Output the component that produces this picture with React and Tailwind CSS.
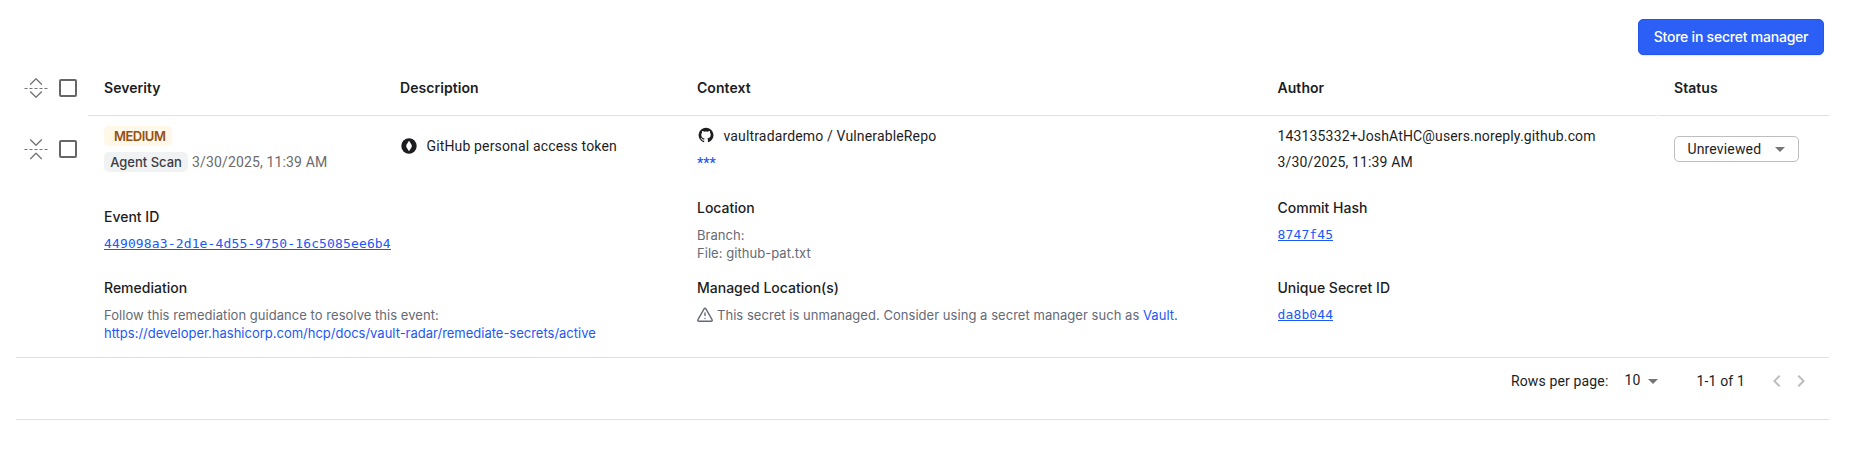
const body = "font-[Roboto,sans-serif] text-sm leading-5 tracking-[0.15px]";
const heading = "font-[Inter,sans-serif] text-sm leading-5 font-medium";
const small = "font-[Inter,sans-serif] text-[13px] leading-[18px] text-[#656a76] tracking-[0.04px]";
const link = "text-[#1c58f5]";
const columns = "grid grid-cols-[72px_296px_297px_580.5px_396.5px_171px]";

function RowsIcon({ collapse }) {
  return (
    <svg className="size-6 shrink-0" viewBox="0 0 24 24" fill="none" stroke="#737373" strokeWidth="1.25" strokeLinecap="round" strokeLinejoin="round">
      <path d="M.5 12.5h23" strokeDasharray="3 2" strokeLinecap="butt" strokeWidth="1" />
      {collapse ? (
        <path d="M6.5 2.8L12 8.3l5.5-5.5M6.5 21.7L12 16.2l5.5 5.5" />
      ) : (
        <path d="M6.5 8.3L12 2.8l5.5 5.5M6.5 15.8l5.5 5.5 5.5-5.5" />
      )}
    </svg>
  );
}

function Controls({ collapse }) {
  return (
    <div className="flex items-center gap-[11px] pl-2">
      <RowsIcon collapse={collapse} />
      <span className="size-[18px] rounded-[2px] border-2 border-[#666]" />
    </div>
  );
}

function Caret() {
  return (
    <svg className="size-6 shrink-0" viewBox="0 0 24 24" fill="#757575">
      <path d="M7 10l5 5 5-5z" />
    </svg>
  );
}

function Header({ children, className = "" }) {
  return (
    <div className={`flex items-center border-b border-[#e0e0e0] pt-px pl-4 font-[Inter,sans-serif] text-sm font-semibold tracking-[0.05px] ${className}`}>
      <span className="leading-5">{children}</span>
    </div>
  );
}

function Hash({ children }) {
  return (
    <a className={`${link} mt-[3px] block w-fit border-b border-[#1c58f5] font-['DejaVu_Sans_Mono',monospace] text-[13px] leading-[11px] tracking-[0.14px]`}>
      {children}
    </a>
  );
}

function Detail({ title, children, className = "" }) {
  return (
    <div className={`h-16 pl-4 ${className}`}>
      <div className={heading}>{title}</div>
      <div className={`pt-2 ${small}`}>{children}</div>
    </div>
  );
}

export default function App() {
  return (
    <div className="h-[449px] w-[1864px] overflow-hidden bg-white pr-[35px] pl-4 text-[#1d1d1f]">
      <div className="flex h-[60px] justify-end pt-[19px] pr-[5px]">
        <button className="h-9 w-[186px] rounded-[5px] border border-[#2457e6] bg-[#2b5ff6] font-[Inter,sans-serif] text-sm font-medium tracking-[-0.22px] text-white shadow-[0_1px_1px_rgba(101,106,118,0.15)]">
          Store in secret manager
        </button>
      </div>

      <div className={`${columns} h-14`}>
        <Controls />
        <Header>Severity</Header>
        <Header>Description</Header>
        <Header>Context</Header>
        <Header className="mr-px">Author</Header>
        <Header>Status</Header>
      </div>

      <div className={`${columns} h-[66px]`}>
        <Controls collapse />
        <div className="pt-[10px] pl-4">
          <div className="flex h-5 w-[68px] items-center rounded-[5px] bg-[#fff7e8] pl-[10px] font-[Inter,sans-serif] text-[13px] leading-5 font-semibold tracking-[-0.5px] text-[#96500f]">
            <span className="-mt-px">MEDIUM</span>
          </div>
          <div className="mt-[6px] flex h-5 items-center gap-[4px]">
            <span className="h-5 w-[84px] rounded-[5px] bg-[#f1f2f3] text-center font-[Inter,sans-serif] text-[13px] leading-[21px] font-medium text-[#3b3d45]">Agent Scan</span>
            <span className={`${body} text-[#6b6b6b]`}>3/30/2025, 11:39 AM</span>
          </div>
        </div>
        <div className="flex h-[60px] items-center gap-[9.5px] pl-[17px]">
          <svg className="-mt-px size-4" viewBox="0 0 16 16">
            <circle cx="8" cy="8" r="7.7" fill="#1d1d1f" />
            <path d="M8 2.8L10.7 7v2L8 13.2 5.3 9V7z" fill="#fff" />
          </svg>
          <span className={body}>GitHub personal access token</span>
        </div>
        <div className="pt-[10px] pl-4">
          <div className="flex h-5 items-center gap-[9.5px]">
            <svg className="-mt-[3px] ml-px size-4" viewBox="0 0 24 24" fill="#1d1d1f">
              <path d="M12 1.27a11 11 0 00-3.48 21.46c.55.09.73-.28.73-.55v-1.84c-3.03.64-3.67-1.46-3.67-1.46-.55-1.29-1.28-1.65-1.28-1.65-.92-.65.1-.65.1-.65 1.1 0 1.73 1.1 1.73 1.1.92 1.65 2.57 1.2 3.21.92a2 2 0 01.64-1.47c-2.47-.27-5.04-1.19-5.04-5.5 0-1.1.46-2.1 1.2-2.84a3.76 3.76 0 010-2.93s.91-.28 3.11 1.1c1.8-.49 3.7-.49 5.5 0 2.1-1.38 3.02-1.1 3.02-1.1a3.76 3.76 0 01.1 2.93c.83.74 1.2 1.74 1.2 2.94 0 4.21-2.57 5.13-5.04 5.4.45.37.82.92.82 2.02v3.03c0 .27.1.64.73.55A11 11 0 0012 1.27" />
            </svg>
            <span className={body}>vaultradardemo / VulnerableRepo</span>
          </div>
          <div className={`${link} mt-[7px] font-[Roboto,sans-serif] text-sm leading-5 font-medium tracking-[0.1px]`}>***</div>
        </div>
        <div className={`pt-[10px] pl-4 ${body}`}>
          <div>143135332+JoshAtHC@users.noreply.github.com</div>
          <div className="mt-[6px]">3/30/2025, 11:39 AM</div>
        </div>
        <div className="flex items-center pl-4">
          <div className={`flex h-[26px] w-[125px] items-center justify-between rounded-[5px] border border-[#bdbdbd] pr-[6px] pl-[12.5px] ${body}`}>
            <span>Unreviewed</span>
            <Caret />
          </div>
        </div>
      </div>

      <div className="grid h-44 grid-cols-[665px_580.5px_567.5px] grid-rows-[64px_64px] gap-y-4 border-b border-[#e0e0e0] pt-4">
        <Detail title="Event ID" className="ml-[72px] pt-[9px]">
          <Hash>449098a3-2d1e-4d55-9750-16c5085ee6b4</Hash>
        </Detail>
        <Detail title="Location">
          <div>Branch:</div>
          <div>File: github-pat.txt</div>
        </Detail>
        <Detail title="Commit Hash">
          <Hash>8747f45</Hash>
        </Detail>
        <Detail title="Remediation" className="ml-[72px]">
          <div>Follow this remediation guidance to resolve this event:</div>
          <a className={`${link} tracking-[-0.01px]`}>https://developer.hashicorp.com/hcp/docs/vault-radar/remediate-secrets/active</a>
        </Detail>
        <Detail title="Managed Location(s)">
          <div className="flex items-center gap-1">
            <svg className="size-4" viewBox="0 0 16 16" fill="none" stroke="#656a76" strokeWidth="1.4" strokeLinejoin="round" strokeLinecap="round">
              <path d="M7.1 1.8L.95 12.6a1 1 0 00.9 1.6h12.3a1 1 0 00.9-1.6L8.9 1.8a1.04 1.04 0 00-1.8 0z" />
              <path d="M8 6v2.6M8 11.4v.1" />
            </svg>
            <span>
              This secret is unmanaged. Consider using a secret manager such as <a className={link}>Vault.</a>
            </span>
          </div>
        </Detail>
        <Detail title="Unique Secret ID">
          <Hash>da8b044</Hash>
        </Detail>
      </div>

      <div className={`flex h-[62px] items-start justify-end border-b border-[#e0e0e0] pt-[11px] ${body}`}>
        <div className="flex h-6 items-center">
          <span className="mr-4">Rows per page:</span>
          <span className="-mt-0.5">10</span>
          <Caret />
          <span className="ml-8">1-1 of 1</span>
          <svg className="ml-5 size-6" viewBox="0 0 24 24" fill="#bdbdbd">
            <path d="M15.41 16.59L10.83 12l4.58-4.59L14 6l-6 6 6 6z" />
          </svg>
          <svg className="mr-4 size-6" viewBox="0 0 24 24" fill="#bdbdbd">
            <path d="M8.59 16.59L13.17 12 8.59 7.41 10 6l6 6-6 6z" />
          </svg>
        </div>
      </div>
    </div>
  );
}
